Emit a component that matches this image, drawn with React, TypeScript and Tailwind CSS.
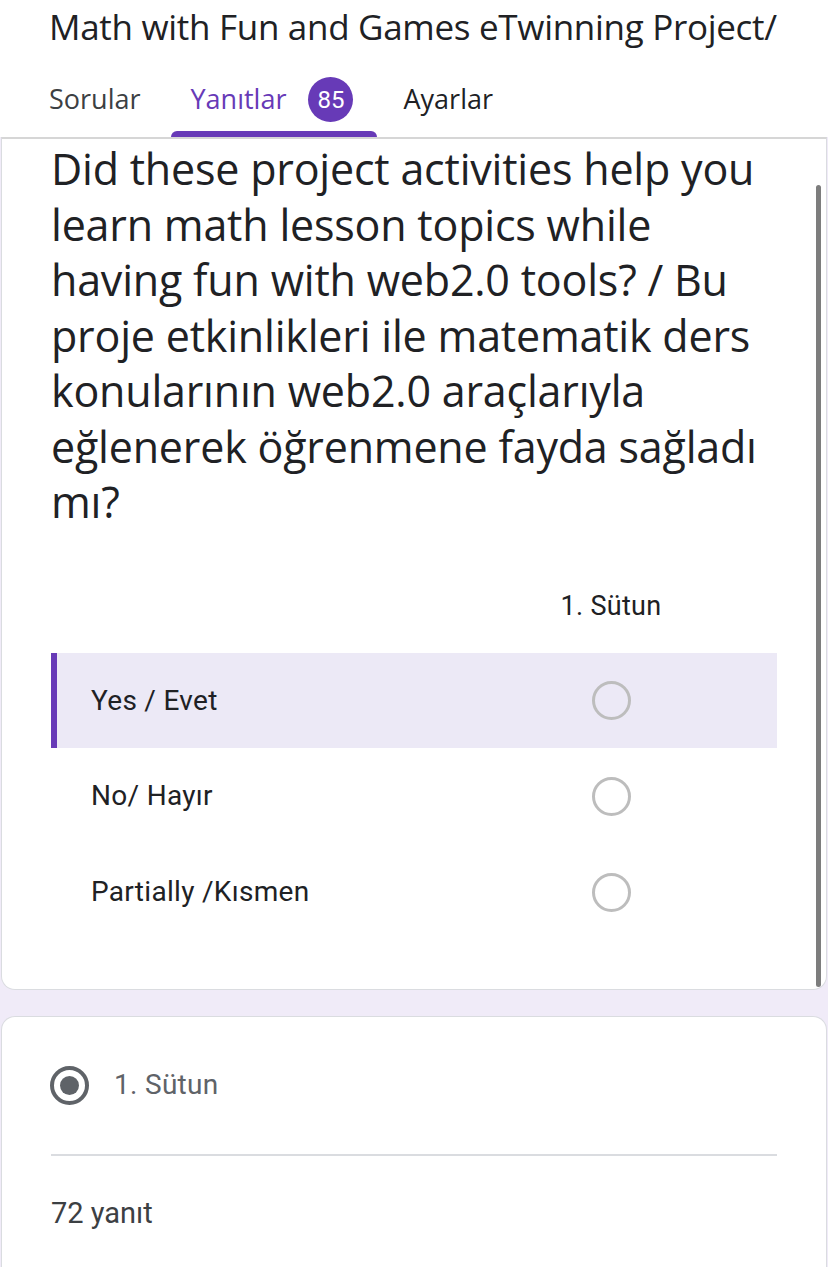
import React from "react";

const rows = ["Yes / Evet", "No/ Hayır", "Partially /Kısmen"];

export default function App() {
  return (
    <div
      className="relative w-[828px] h-[1267px] overflow-hidden bg-[#f0ebf8]"
      style={{ fontFamily: "Roboto, 'Noto Sans', sans-serif" }}
    >
      {/* Header */}
      <div className="bg-white h-[137px] flex flex-col">
        <div
          className="h-[54px] pl-[49px] flex items-center whitespace-nowrap text-[35px] text-[#202124] tracking-[-0.3px]"
          style={{ fontFamily: "'Open Sans', sans-serif" }}
        >
          Math with Fun and Games eTwinning Project/
        </div>
        <div className="flex-1 flex items-stretch pl-[29px]">
          <div className="flex flex-col pl-[20px] pr-[30px]">
            <div className="flex-1 flex items-center pt-[14px] text-[27px] text-[#3c4043]" style={{ fontFamily: "'Open Sans', sans-serif" }}>Sorular</div>
            <div className="h-[6px]" />
          </div>
          <div className="flex flex-col w-[206px]">
            <div className="flex-1 flex items-center pt-[14px] pl-[20px] gap-[22px]">
              <span className="text-[27px] text-[#673ab7]" style={{ fontFamily: "'Open Sans', sans-serif" }}>Yanıtlar</span>
              <span className="w-[45px] h-[45px] rounded-full bg-[#673ab7] text-white text-[24px] flex items-center justify-center">85</span>
            </div>
            <div className="h-[6px] bg-[#673ab7] rounded-t-[6px]" />
          </div>
          <div className="flex flex-col pl-[27px]">
            <div className="flex-1 flex items-center pt-[14px] text-[27px] text-[#202124]" style={{ fontFamily: "'Open Sans', sans-serif" }}>Ayarlar</div>
            <div className="h-[6px]" />
          </div>
        </div>
      </div>

      {/* Card 1 */}
      <div className="relative bg-white mx-[1px] border-x border-b border-[#dadce0] rounded-b-[14px] h-[853px] border-t-2 border-t-[#d6d6d6]">
        <div
          className="pl-[49px] pr-[40px] pt-[2px] text-[43px] leading-[55.5px] text-[#202124] tracking-[-0.2px]"
          style={{ fontFamily: "'Open Sans', sans-serif" }}
        >
          Did these project activities help you learn math lesson topics while having fun with web2.0 tools? / Bu proje etkinlikleri ile matematik ders konularının web2.0 araçlarıyla eğlenerek öğrenmene fayda sağladı mı?
        </div>
        <div className="mt-[56px] flex mx-[49px]">
          <div className="flex-1" />
          <div className="w-[124px] flex justify-center text-[27px] text-[#202124] tracking-[0.3px]">1. Sütun</div>
          <div className="w-[104px]" />
        </div>
        <div className="mt-[27px] mx-[49px] flex flex-col">
          {rows.map((r, i) => (
            <div
              key={r}
              className={
                i === 0
                  ? "h-[95px] flex items-center bg-[#ece9f6] border-l-[6px] border-[#673ab7] pl-[34px]"
                  : "h-[96px] flex items-center pl-[40px]"
              }
            >
              <div className="flex-1 text-[28px] text-[#202124] tracking-[0.3px]">{r}</div>
              <div className="w-[124px] flex justify-center">
                <div className="w-[39px] h-[39px] rounded-full border-[3px] border-[#bdbdbd]" />
              </div>
              <div className="w-[104px]" />
            </div>
          ))}
        </div>
        {/* scrollbar overlay */}
        <div className="absolute right-[5px] top-[46px] w-[5px] h-[802px] rounded-full bg-[#7d7d7d]" />
      </div>

      {/* Card 2 */}
      <div className="mt-[26px] bg-white mx-[1px] border-x border-t border-[#dadce0] rounded-t-[14px] h-[260px]">
        <div className="pl-[48px] pt-[47px] flex items-center gap-[25px]">
          <div className="w-[39px] h-[39px] rounded-full border-[4px] border-[#5f6368] flex items-center justify-center">
            <div className="w-[19px] h-[19px] rounded-full bg-[#5f6368]" />
          </div>
          <span className="text-[28px] text-[#5f6368] tracking-[0.3px]">1. Sütun</span>
        </div>
        <div className="mx-[49px] mt-[48px] h-[2px] bg-[#dadce0]" />
        <div className="pl-[49px] mt-[36px] text-[29px] text-[#3c4043]">72 yanıt</div>
      </div>
    </div>
  );
}
